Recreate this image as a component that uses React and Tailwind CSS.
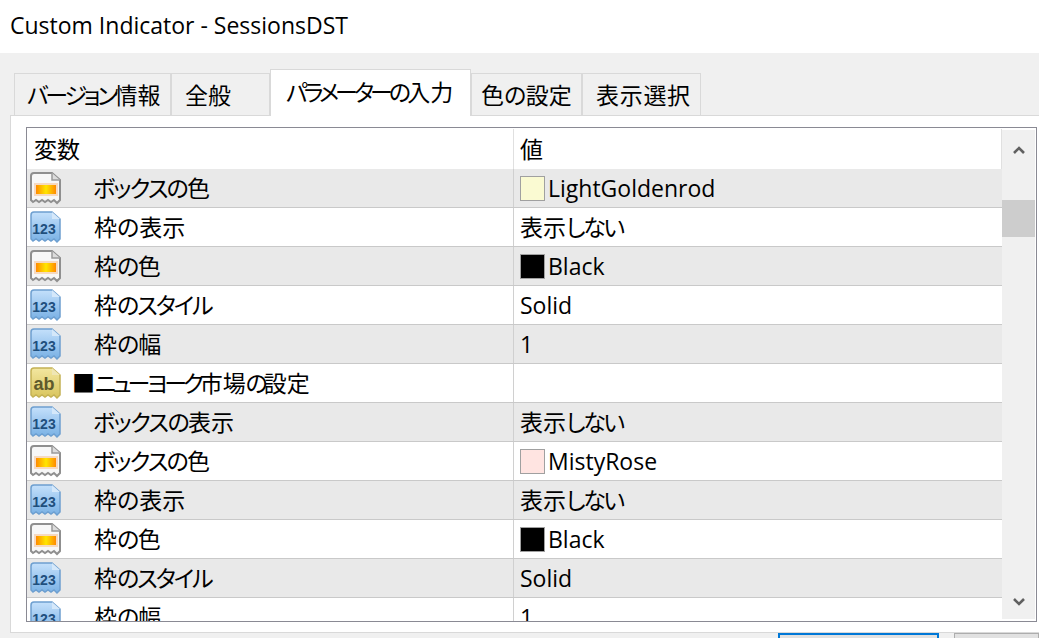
const rows = [
  { icon: 'color', name: 'ボックスの色', track: 'tracking-[-1.8px]', pad: 'pl-[31px]', value: 'LightGoldenrod', swatch: 'bg-[#fafad2]' },
  { icon: 'num', name: '枠の表示', value: '表示しない' },
  { icon: 'color', name: '枠の色', track: 'tracking-[-1.5px]', value: 'Black', swatch: 'bg-black' },
  { icon: 'num', name: '枠のスタイル', track: 'tracking-[-2px]', value: 'Solid' },
  { icon: 'num', name: '枠の幅', track: 'tracking-[-1px]', value: '1' },
  { icon: 'text', name: '■ニューヨーク市場の設定', track: 'tracking-[-4px]', pad: 'pl-[10px]', value: '' },
  { icon: 'num', name: 'ボックスの表示', track: 'tracking-[-1.6px]', pad: 'pl-[31px]', value: '表示しない' },
  { icon: 'color', name: 'ボックスの色', track: 'tracking-[-1.8px]', pad: 'pl-[31px]', value: 'MistyRose', swatch: 'bg-[#ffe4e1]' },
  { icon: 'num', name: '枠の表示', value: '表示しない' },
  { icon: 'color', name: '枠の色', track: 'tracking-[-1.5px]', value: 'Black', swatch: 'bg-black' },
  { icon: 'num', name: '枠のスタイル', track: 'tracking-[-2px]', value: 'Solid' },
  { icon: 'num', name: '枠の幅', track: 'tracking-[-1px]', value: '1' },
]

const tabs = [
  { label: 'バージョン情報', width: 'w-[157px] pl-[12px]', track: 'tracking-[-3.3px]' },
  { label: '全般', width: 'w-[99px] pl-[13px]' },
  { label: 'パラメーターの入力', width: 'w-[201px] pl-[15px]', track: 'tracking-[-3.9px]', active: true },
  { label: '色の設定', width: 'w-[111px] pl-[9px]', track: 'tracking-[-0.5px]' },
  { label: '表示選択', width: 'w-[119px] pl-[13px] tracking-[0.7px]' },
]

const docPath = 'M5 2 H23 L31 9 V29 L28 32 L25 29 L22 31 L19 29 L16 31 L13 29 L10 31 L7 29 L4 31 L2 29 V5 Q2 2 5 2 Z'

// kana is much narrower than kanji in the original UI font, so only kana gets squeezed
const Squeezed = ({ text, track }) => (
  <>
    {text.split(/([\u3040-\u30ff]+)/).map((part, i) => (
      i % 2 === 1 ? <span key={i} className={track}>{part}</span> : part
    ))}
  </>
)

const ParamIcon = ({ type }) => {
  if (type === 'color') {
    return (
      <svg width="33" height="34" viewBox="0 0 33 34" className="shrink-0">
        <defs>
          <linearGradient id="flame" x1="0" x2="1" y1="0" y2="0">
            <stop offset="0" stopColor="#ff8a00" />
            <stop offset="0.5" stopColor="#ffe600" />
            <stop offset="1" stopColor="#ff8a00" />
          </linearGradient>
        </defs>
        <path d={docPath} fill="#f7f7f7" stroke="#8f8f8f" strokeWidth="2" />
        <path d="M23 2 V9 H31" fill="#dcdcdc" stroke="#9a9a9a" strokeWidth="1.5" />
        <rect x="5" y="12" width="24" height="13" fill="#f6d9c0" />
        <rect x="7" y="14" width="20" height="9" fill="url(#flame)" />
      </svg>
    )
  }
  const isText = type === 'text'
  return (
    <svg width="33" height="34" viewBox="0 0 33 34" className="shrink-0">
      <defs>
        <linearGradient id="blueDoc" x1="0" x2="0" y1="0" y2="1">
          <stop offset="0" stopColor="#c4e0fb" />
          <stop offset="1" stopColor="#78b0e4" />
        </linearGradient>
        <linearGradient id="yellowDoc" x1="0" x2="0" y1="0" y2="1">
          <stop offset="0" stopColor="#f3e7a0" />
          <stop offset="1" stopColor="#d8c45c" />
        </linearGradient>
      </defs>
      <path d={docPath} fill={isText ? 'url(#yellowDoc)' : 'url(#blueDoc)'} stroke={isText ? '#c4b154' : '#6d9fd0'} strokeWidth="1.5" />
      <path d="M23 2 V9 H31 Z" fill={isText ? '#efe6b4' : '#d5e8fa'} />
      <text
        x="15"
        y="24"
        textAnchor="middle"
        fontFamily="'Liberation Sans', sans-serif"
        fontWeight="700"
        fontSize={isText ? 18 : 14}
        fill={isText ? '#5f5a2c' : '#1f4f7d'}
      >
        {isText ? 'ab' : '123'}
      </text>
    </svg>
  )
}

const ParamRow = ({ row, index }) => (
  <div className={`flex h-[39px] shrink-0 border-b border-[#c9c9c9] ${index % 2 === 0 ? 'bg-[#e9e9e9]' : 'bg-white'}`}>
    <div className="flex w-[487px] items-center border-r border-[#d0d0d0] pl-[2px]">
      <ParamIcon type={row.icon} />
      <span className={`whitespace-nowrap pt-[1px] ${row.pad || 'pl-[32px]'}`}>
        <Squeezed text={row.name} track={row.track} />
      </span>
    </div>
    <div className="flex flex-1 items-center pl-[6px]">
      {row.swatch && <span className={`mr-[3px] h-[25px] w-[25px] border border-[#a0a0a0] ${row.swatch}`}></span>}
      <span className="whitespace-nowrap pt-[1px]">
        <Squeezed text={row.value} track="tracking-[-2.3px]" />
      </span>
    </div>
  </div>
)

const App = () => {
  return (
    <div className="flex h-[638px] w-[1039px] flex-col overflow-hidden bg-[#f0f0f0] text-[23px] leading-none text-black [font-family:'Open_Sans','Noto_Sans_CJK_JP',sans-serif] [font-feature-settings:'palt']">
      <div className="flex h-[53px] shrink-0 items-center bg-white pb-[3px] pl-[10px]">Custom Indicator - SessionsDST</div>

      <div className="flex h-[62px] shrink-0 items-end pl-[14px]">
        {tabs.map(tab => (
          <div
            key={tab.label}
            className={`flex items-center whitespace-nowrap border border-b-0 border-[#d9d9d9] ${tab.width}
              ${tab.active ? 'relative z-10 -mb-[1px] h-[47px] bg-white pb-[2px]' : 'h-[42px] bg-[#f0f0f0] pt-[1px]'}
            `}
          >
            <span><Squeezed text={tab.label} track={tab.track} /></span>
          </div>
        ))}
      </div>

      <div className="ml-[10px] h-[518px] shrink-0 border border-r-0 border-[#d9d9d9] bg-white pb-[10px] pl-[15px] pr-[2px] pt-[11px]">
        <div className="flex h-full border border-[#8a8a94]">
          <div className="flex w-[975px] flex-col overflow-hidden">
            <div className="flex h-[41px] shrink-0 bg-white pt-[1px]">
              <div className="flex w-[487px] items-center border-r border-[#e0e0e0] pl-[7px]">変数</div>
              <div className="flex flex-1 items-center border-r border-[#e0e0e0] pl-[6px]">値</div>
            </div>
            {rows.map((row, i) => <ParamRow key={i} row={row} index={i} />)}
          </div>

          <div className="flex w-[34px] flex-col py-[2px] pr-[1px]">
            <div className="flex h-full flex-col bg-[#f0f0f0]">
              <div className="flex h-[39px] items-center justify-center pt-[1px]">
                <svg width="12" height="10" viewBox="0 0 12 10"><path d="M1 8 L6 3 L11 8" fill="none" stroke="#606060" strokeWidth="2.6" /></svg>
              </div>
              <div className="mt-[31px] h-[37px] bg-[#cdcdcd]"></div>
              <div className="flex-1"></div>
              <div className="flex h-[39px] items-center justify-center pt-[5px]">
                <svg width="12" height="10" viewBox="0 0 12 10"><path d="M1 2 L6 7 L11 2" fill="none" stroke="#606060" strokeWidth="2.6" /></svg>
              </div>
            </div>
          </div>
        </div>
      </div>

      <div className="flex flex-1 justify-end gap-[15px] overflow-hidden">
        <div className="h-[40px] w-[161px] border-2 border-[#0078d7] bg-[#e1e1e1]"></div>
        <div className="h-[40px] w-[85px] border border-[#adadad] bg-[#e1e1e1]"></div>
      </div>
    </div>
  )
}

export default App
